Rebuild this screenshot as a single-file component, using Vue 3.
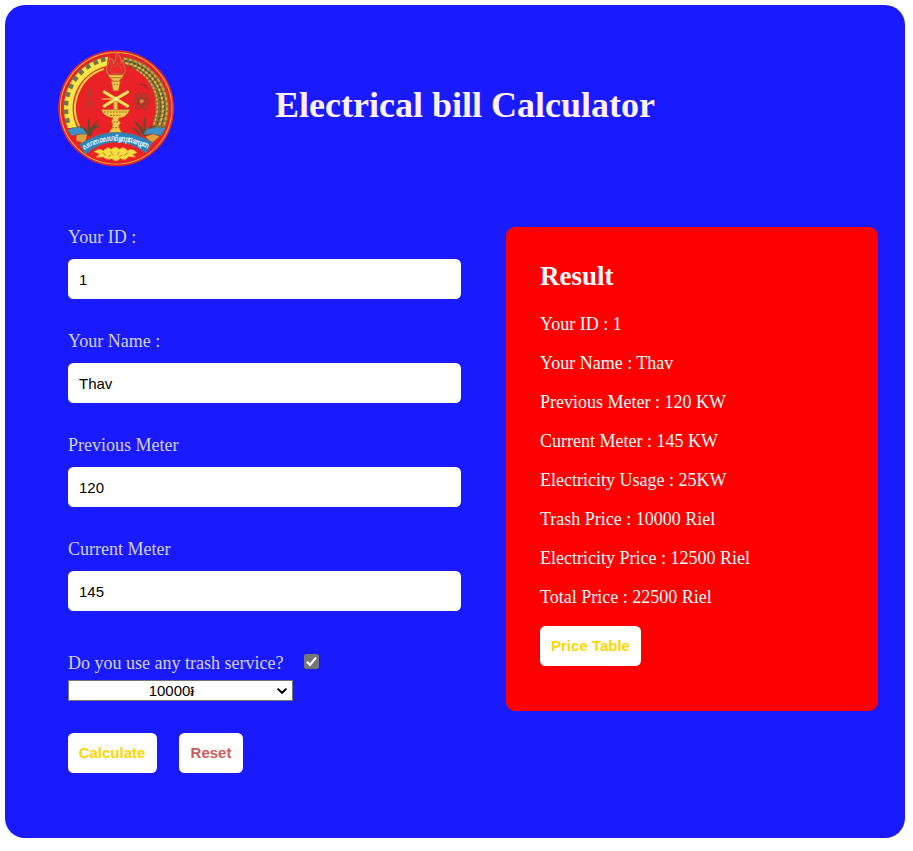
<script setup>
import { ref, computed } from 'vue'

const form = ref({ id: '1', name: 'Thav', previous: '120', current: '145' })
const useTrash = ref(true)
const trashPrice = ref('10000')

const fields = [
  { key: 'id', label: 'Your ID :' },
  { key: 'name', label: 'Your Name :' },
  { key: 'previous', label: 'Previous Meter' },
  { key: 'current', label: 'Current Meter' },
]

const usage = computed(() => Number(form.value.current) - Number(form.value.previous))
const trash = computed(() => (useTrash.value ? Number(trashPrice.value) : 0))
const electricity = computed(() => usage.value * 500)

const results = computed(() => [
  `Your ID : ${form.value.id}`,
  `Your Name : ${form.value.name}`,
  `Previous Meter : ${form.value.previous} KW`,
  `Current Meter : ${form.value.current} KW`,
  `Electricity Usage : ${usage.value}KW`,
  `Trash Price : ${trash.value} Riel`,
  `Electricity Price : ${electricity.value} Riel`,
  `Total Price : ${trash.value + electricity.value} Riel`,
])

function reset() {
  form.value = { id: '', name: '', previous: '', current: '' }
}

// Cog teeth along the left rim of the emblem, in degrees
const teeth = [166, 176, 186, 196, 206, 216, 226, 236, 246, 255]
</script>

<template>
  <main class="card">
    <header class="header">
      <svg class="emblem" viewBox="0 0 396 396">
        <defs>
          <path id="ribbon-line" d="M103 330 Q194 278 290 325" />
        </defs>
        <circle cx="198.5" cy="205" r="174" fill="#e0262c" />
        <circle cx="198.5" cy="205" r="167" fill="none" stroke="#eca63a" stroke-width="3.5" />
        <circle cx="198.5" cy="205" r="165" fill="#ea2127" />
        <!-- cog -->
        <path d="M174 50 A157 157 0 0 0 53 264 L82 264 A130 130 0 0 1 170 78Z" fill="#f8e645" />
        <path d="M161 87 A124 124 0 0 0 89 262" fill="none" stroke="#f5d840" stroke-width="6" />
        <g fill="#75724a">
          <rect v-for="a in teeth" :key="a" x="144" y="-7" width="15" height="14"
            :transform="`translate(198.5 205) rotate(${a})`" />
        </g>
        <!-- wheat -->
        <path d="M219 50 A156 156 0 0 1 345 264 L302 270 Q340 165 276 103 Q250 84 222 70Z" fill="#8f7236" />
        <g fill="none" stroke-linecap="round">
          <path d="M225 56 A150 150 0 0 1 342 254" stroke="#c9a345" stroke-width="6" stroke-dasharray="5 10" />
          <path d="M227 63 A143 143 0 0 1 334 254" stroke="#544f2e" stroke-width="5" stroke-dasharray="4 9" />
          <path d="M229 70 A135 135 0 0 1 327 258" stroke="#dcbc4c" stroke-width="6" stroke-dasharray="4 9" />
          <path d="M240 78 A127 127 0 0 1 318 258" stroke="#5a5430" stroke-width="4" stroke-dasharray="6 8" />
          <path d="M262 90 Q330 135 321 215 Q318 240 309 260" stroke="#d4b148" stroke-width="5" stroke-dasharray="3 9" />
        </g>
        <path d="M270 132 Q286 134 293 146" fill="none" stroke="#8e3527" stroke-width="5" />
        <!-- flame -->
        <path d="M177 106 C163 92 169 79 176 69 Q180 61 178 53 Q192 59 190 72 Q202 54 196 37 Q216 50 214 69 L219 61 Q219 72 224 82 Q230 96 216 106Z"
          fill="#ed282d" stroke="#bf7440" stroke-width="3.5" />
        <path d="M187 101 Q176 89 187 78 Q194 87 203 67 Q207 85 214 82 Q217 96 207 102Z" fill="none" stroke="#c25a3c" stroke-width="3" />
        <!-- torch -->
        <g fill="#f3c845" stroke="#b07a34" stroke-width="2">
          <path d="M174 105 H221 L216 113 H180Z" />
          <path d="M181 114 H215 L207 123 H190Z" />
          <path d="M184 124 H211 L205 152 H190Z" />
          <path d="M191 184 H203 V211 H191Z" />
          <path d="M154 209 H239 Q231 231 207 234 L205 241 L212 249 L206 257 L209 267 L216 279 H177 L186 263 L189 252 L184 245 L190 234 Q161 230 154 209Z" />
        </g>
        <path d="M162 216 H230 M181 226 H211 M190 246 H205 M187 263 H207 M190 133 H206" fill="none" stroke="#8a6330" stroke-width="3" stroke-dasharray="5 4" />
        <!-- crossed tools -->
        <g stroke="#a8702f" stroke-width="11" stroke-linecap="round">
          <path d="M163 156 L233 198 M233 156 L163 198" />
        </g>
        <g stroke="#fbe056" stroke-width="8" stroke-linecap="round">
          <path d="M163 156 L233 198 M233 156 L163 198" />
        </g>
        <path d="M157 177 H190" stroke="#efb94a" stroke-width="4" />
        <circle cx="198" cy="177" r="7" fill="#fff2a4" stroke="#c9953a" />
        <!-- compass and atom -->
        <path d="M119 137 V150 M119 149 L106 214 M119 149 L132 216 M110 190 L128 184 M115 149 H124" fill="none" stroke="#a94032" stroke-width="3.5" />
        <g fill="none" stroke="#94402c" stroke-width="3.5">
          <ellipse cx="275" cy="184" rx="25" ry="9" />
          <ellipse cx="275" cy="184" rx="27" ry="10" transform="rotate(60 275 184)" />
          <ellipse cx="275" cy="184" rx="27" ry="10" transform="rotate(-60 275 184)" />
        </g>
        <circle cx="275" cy="184" r="6" fill="#c98a3c" />
        <!-- leaves -->
        <g fill="#5e4a30">
          <path d="M112 287 Q101 263 78 256 Q99 257 114 273 Q110 249 118 231 Q120 251 119 274 Q133 244 146 241 Q130 255 124 286Z" />
          <path d="M102 281 Q113 266 126 260 Q139 252 151 260 Q132 261 118 287Z" />
          <path d="M278 287 Q269 263 250 244 Q270 250 281 272 Q278 244 285 229 Q288 249 287 273 Q299 254 318 258 Q300 266 289 289Z" />
          <path d="M273 285 Q260 259 237 264 Q255 264 265 284Z" />
        </g>
        <!-- ribbon -->
        <path d="M80 286 Q94 279 112 282 L104 314 Q94 304 79 303Z M312 281 L328 290 L306 308 L286 290Z" fill="#d6a43b" />
        <path d="M52 271 Q70 257 98 265 L112 283 Q88 278 66 288Z" fill="#3e91c4" stroke="#536f72" stroke-width="2" />
        <path d="M347 263 Q317 259 290 268 L280 284 Q307 278 333 287Z" fill="#3e91c4" stroke="#536f72" stroke-width="2" />
        <path d="M89 313 Q145 277 199 277 Q253 277 307 307 L288 339 Q243 304 194 306 Q147 307 106 343Z" fill="#2d82bc" stroke="#537987" stroke-width="2" />
        <text class="ribbon-text"><textPath href="#ribbon-line" textLength="198">សហភាពសហព័ន្ធយុវជនកម្ពុជា</textPath></text>
        <!-- lower flower -->
        <path d="M132 335 Q151 322 160 333 Q172 317 184 328 Q196 315 208 328 Q223 317 232 332 Q247 323 261 338 L248 343 L256 351 L236 350 Q225 364 211 355 Q198 370 186 356 Q170 362 160 351 L139 352 L148 342Z"
          fill="#f7df3e" stroke="#dca235" stroke-width="2" />
        <path d="M157 337 L169 347 M181 334 L190 346 M208 335 L202 346 M235 338 L222 346 M174 351 L184 345 M207 351 L217 345" fill="none" stroke="#b98a34" stroke-width="3" />
      </svg>
      <h1>Electrical bill Calculator</h1>
    </header>

    <div class="columns">
      <form class="form" @submit.prevent>
        <div v-for="f in fields" :key="f.key" class="field">
          <label :for="f.key">{{ f.label }}</label>
          <input :id="f.key" v-model="form[f.key]" type="text" />
        </div>

        <div class="trash">
          <label for="trash">Do you use any trash service?</label>
          <span class="check">
            <input id="trash" v-model="useTrash" type="checkbox" />
            <svg v-if="useTrash" viewBox="0 0 15 15"><path d="M3 7.8 L6 10.9 L12 3.6" /></svg>
          </span>
        </div>
        <div class="select">
          <select v-model="trashPrice">
            <option value="10000">10000៛</option>
          </select>
          <svg viewBox="0 0 12 8"><path d="M1.6 1.6 L6 5.8 L10.4 1.6" /></svg>
        </div>

        <div class="actions">
          <button class="btn calculate" type="submit">Calculate</button>
          <button class="btn reset" type="button" @click="reset">Reset</button>
        </div>
      </form>

      <section class="result">
        <h2>Result</h2>
        <p v-for="line in results" :key="line">{{ line }}</p>
        <button class="btn table" type="button">Price Table</button>
      </section>
    </div>
  </main>
</template>

<style>
body {
  background: #fff;
}
</style>

<style scoped>
* {
  box-sizing: border-box;
}
.card {
  width: 900px;
  height: 833px;
  margin: 5px;
  padding: 35px 27px 0 45px;
  display: flow-root;
  border-radius: 20px;
  background: #1a1aff;
  font-family: "Liberation Serif", "Times New Roman", serif;
  font-size: 18px;
}
.header {
  display: flex;
  height: 187px;
}
.emblem {
  width: 132px;
  height: 132px;
  flex: none;
}
.ribbon-text {
  fill: #e5f7fa;
  font: bold 20px "Noto Sans", sans-serif;
}
h1 {
  margin: 45px 0 0 93px;
  font-size: 36px;
  line-height: 40px;
  color: #fff0f5;
  white-space: nowrap;
}
.columns {
  display: flex;
  justify-content: space-between;
  align-items: flex-start;
}
.form {
  width: 393px;
  margin-left: 18px;
  color: #d3d3d3;
}
.field {
  height: 104px;
}
.field label {
  display: block;
  height: 32px;
  line-height: 20px;
}
.field input {
  display: block;
  width: 393px;
  height: 40px;
  padding: 1px 11px 0;
  border: 0;
  border-radius: 5.5px;
  background: #fff;
  color: #000;
  font: 15px "Liberation Sans", Arial, sans-serif;
}
.trash {
  display: flex;
  height: 27px;
  margin-top: 10px;
  line-height: 20px;
}
.check {
  display: grid;
  width: 15px;
  height: 15px;
  margin: 1px 0 0 21px;
}
.check input,
.check svg {
  grid-area: 1 / 1;
  width: 15px;
  height: 15px;
  margin: 0;
}
.check input {
  appearance: none;
  border-radius: 2.5px;
  background: #767676;
}
.check svg {
  pointer-events: none;
  fill: none;
  stroke: #fff;
  stroke-width: 2.2;
}
.select {
  display: grid;
  align-items: center;
  width: 225px;
  height: 21px;
}
.select select {
  grid-area: 1 / 1;
  width: 225px;
  height: 21px;
  padding: 0 17px 0 0;
  appearance: none;
  border: 1px solid #767676;
  border-radius: 0;
  background: #fff;
  color: #000;
  font: 15px "Liberation Sans", Arial, sans-serif;
  text-align: center;
  text-align-last: center;
}
.select svg {
  grid-area: 1 / 1;
  justify-self: end;
  width: 12px;
  height: 8px;
  margin-right: 5px;
  pointer-events: none;
  fill: none;
  stroke: #000;
  stroke-width: 2;
}
.actions {
  display: flex;
  gap: 22px;
  margin-top: 32px;
}
.btn {
  height: 40px;
  padding: 0 0 2px;
  border: 0;
  border-radius: 5.5px;
  background: #fff;
  color: #ffd700;
  font: bold 15px "Liberation Sans", Arial, sans-serif;
}
.calculate {
  width: 89px;
  padding-right: 1px;
}
.reset {
  width: 64px;
  color: #cd5c5c;
}
.table {
  display: block;
  width: 101px;
}
.result {
  width: 372px;
  height: 484px;
  padding: 34px;
  border-radius: 9px;
  background: #f00;
  color: #fff;
}
h2 {
  margin: 0 0 22px;
  font-size: 27px;
  line-height: 31px;
}
.result p {
  height: 21px;
  margin: 0 0 18px;
  line-height: 20px;
}
</style>
